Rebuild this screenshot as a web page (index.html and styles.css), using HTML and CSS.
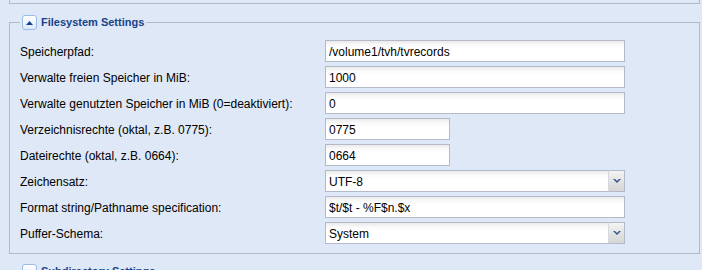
FILE: index.html
```html
<!DOCTYPE html>
<html lang="de">
<head>
<meta charset="utf-8">
<title>Filesystem Settings</title>
<link rel="stylesheet" href="styles.css">
</head>
<body>
<div class="page">
  <div class="fs-prev"></div>

  <fieldset class="fs">
    <legend class="legend">
      <span class="tool"><svg width="7" height="4" viewBox="0 0 7 4"><path d="M0 4L3.5 0L7 4z" fill="#15428b"/></svg></span>
      <span class="title">Filesystem Settings</span>
    </legend>

    <div class="row"><label class="lbl">Speicherpfad:</label><div class="field w300"><input class="txt" value="/volume1/tvh/tvrecords"></div></div>
    <div class="row"><label class="lbl">Verwalte freien Speicher in MiB:</label><div class="field w300"><input class="txt" value="1000"></div></div>
    <div class="row"><label class="lbl">Verwalte genutzten Speicher in MiB (0=deaktiviert):</label><div class="field w300"><input class="txt" value="0"></div></div>
    <div class="row"><label class="lbl">Verzeichnisrechte (oktal, z.B. 0775):</label><div class="field w125"><input class="txt" value="0775"></div></div>
    <div class="row"><label class="lbl">Dateirechte (oktal, z.B. 0664):</label><div class="field w125"><input class="txt" value="0664"></div></div>
    <div class="row"><label class="lbl">Zeichensatz:</label><div class="field w300 combo"><input class="txt" value="UTF-8" readonly><span class="trigger"><svg width="8" height="4" viewBox="0 0 8 4"><path d="M0 0h2l2 2 2-2h2l-4 4z" fill="#2a5592"/></svg></span></div></div>
    <div class="row"><label class="lbl">Format string/Pathname specification:</label><div class="field w300"><input class="txt" value="$t/$t - %F$n.$x"></div></div>
    <div class="row"><label class="lbl">Puffer-Schema:</label><div class="field w300 combo"><input class="txt" value="System" readonly><span class="trigger"><svg width="8" height="4" viewBox="0 0 8 4"><path d="M0 0h2l2 2 2-2h2l-4 4z" fill="#2a5592"/></svg></span></div></div>
  </fieldset>

  <fieldset class="fs collapsed">
    <legend class="legend">
      <span class="tool"><svg width="7" height="4" viewBox="0 0 7 4"><path d="M0 0L3.5 4L7 0z" fill="#15428b"/></svg></span>
      <span class="title">Subdirectory Settings</span>
    </legend>
  </fieldset>
</div>
</body>
</html>
```

FILE: styles.css
```css
html, body {
  margin: 0;
  padding: 0;
  background: #dfe8f6;
}
body {
  font-family: "Liberation Sans", Arial, sans-serif;
  font-size: 12px;
  color: #000;
  overflow: hidden;
}
.page {
  width: 691px;
  padding-left: 9px;
}
.fs-prev {
  height: 4px;
  box-sizing: border-box;
  border: 1px solid #b5b8c8;
  border-top: none;
  margin-bottom: 11px;
}
.fs {
  margin: 0 0 10px 0;
  padding: 10px 10px 5px 10px;
  border: 1px solid #b5b8c8;
  min-width: 0;
}
.fs.collapsed {
  padding: 0 10px;
  border-bottom: none;
}
.legend {
  display: flex;
  align-items: center;
  height: 15px;
  padding: 0 2px;
  margin: 0;
}
.tool {
  width: 13px;
  height: 13px;
  border: 1px solid #99bbe8;
  border-radius: 3px;
  background: linear-gradient(#ffffff, #dde8f8);
  display: flex;
  align-items: center;
  justify-content: center;
  margin-right: 4px;
}
.tool svg { display: block; }
.title {
  font-family: "Liberation Sans", Arial, sans-serif;
  font-weight: bold;
  font-size: 11px;
  line-height: 15px;
  color: #15428b;
}
.row {
  display: flex;
  align-items: flex-start;
  margin-bottom: 4px;
}
.lbl {
  width: 305px;
  flex: none;
  padding-top: 5px;
  line-height: 14px;
  white-space: nowrap;
}
.field {
  display: flex;
  height: 22px;
}
.w300 { width: 300px; }
.w125 { width: 125px; }
.txt {
  flex: 1;
  min-width: 0;
  box-sizing: border-box;
  height: 22px;
  margin: 0;
  border: 1px solid #b5b8c8;
  padding: 2px 3px 0 3px;
  font-family: "Liberation Sans", Arial, sans-serif;
  font-size: 12px;
  color: #000;
  background: linear-gradient(#eaeaea 0, #fafafa 4px, #ffffff 8px);
  outline: none;
}
.combo .txt {
  border-right: none;
}
.trigger {
  flex: none;
  width: 17px;
  height: 22px;
  box-sizing: border-box;
  border: 1px solid #b5b8c8;
  border-left: 1px solid #d6d8e0;
  background: linear-gradient(#f4f4f4, #e0e0e0 60%, #d6d6d6);
  display: flex;
  align-items: center;
  justify-content: center;
}
.trigger svg { display: block; margin-top: -1px; }
```
